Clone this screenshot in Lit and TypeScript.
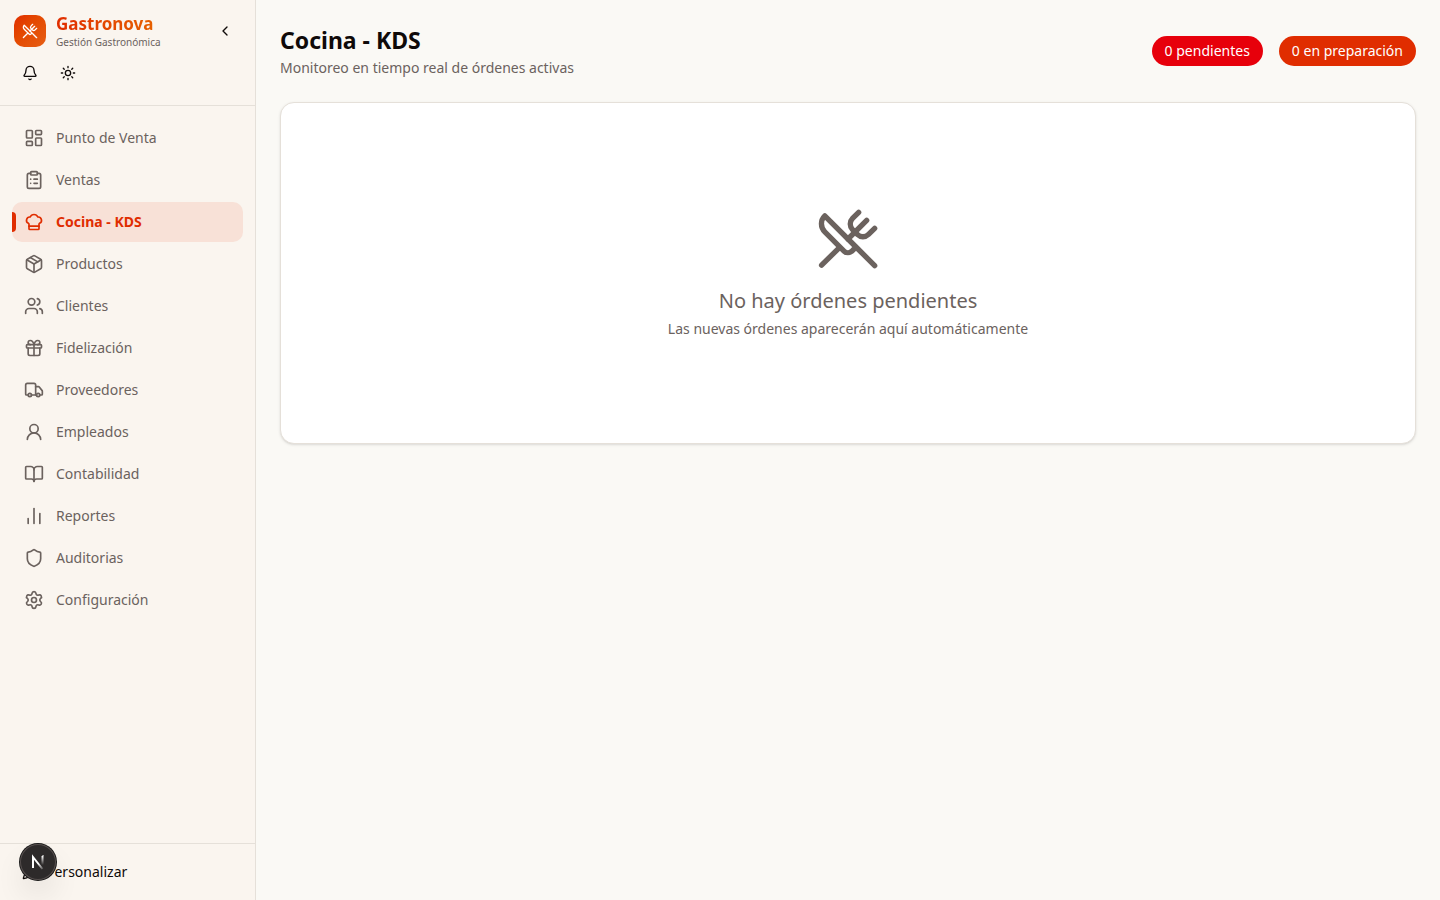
import { LitElement, html, css, svg } from "lit";
import { customElement, property, state } from "lit/decorators.js";
import { classMap } from "lit/directives/class-map.js";

const icons = {
  utensils: svg`<path d="m16 2-2.3 2.3a3 3 0 0 0 0 4.2l1.8 1.8a3 3 0 0 0 4.2 0L22 8"/><path d="M15 15 3.3 3.3a4.2 4.2 0 0 0 0 6l7.3 7.3c.7.7 2 .7 2.8 0L15 15Zm0 0 7 7"/><path d="m2.1 21.8 6.4-6.3"/><path d="m19 5-7 7"/>`,
  chevronLeft: svg`<path d="m15 18-6-6 6-6"/>`,
  bell: svg`<path d="M10.268 21a2 2 0 0 0 3.464 0"/><path d="M3.262 15.326A1 1 0 0 0 4 17h16a1 1 0 0 0 .74-1.673C19.41 13.956 18 12.499 18 8A6 6 0 0 0 6 8c0 4.499-1.411 5.956-2.738 7.326"/>`,
  sun: svg`<circle cx="12" cy="12" r="4"/><path d="M12 2v2M12 20v2m-7.07-17.07 1.41 1.41m11.32 11.32 1.41 1.41M2 12h2m16 0h2M6.34 17.66l-1.41 1.41M19.07 4.93l-1.41 1.41"/>`,
  dashboard: svg`<rect width="7" height="9" x="3" y="3" rx="1"/><rect width="7" height="5" x="14" y="3" rx="1"/><rect width="7" height="9" x="14" y="12" rx="1"/><rect width="7" height="5" x="3" y="16" rx="1"/>`,
  clipboard: svg`<rect width="8" height="4" x="8" y="2" rx="1"/><path d="M16 4h2a2 2 0 0 1 2 2v14a2 2 0 0 1-2 2H6a2 2 0 0 1-2-2V6a2 2 0 0 1 2-2h2"/><path d="M12 11h4M12 16h4M8 11h.01M8 16h.01"/>`,
  chef: svg`<path d="M17 21a1 1 0 0 0 1-1v-5.35c0-.457.316-.844.727-1.041a4 4 0 0 0-2.134-7.589 5 5 0 0 0-9.186 0 4 4 0 0 0-2.134 7.588c.411.198.727.585.727 1.041V20a1 1 0 0 0 1 1Z"/><path d="M6 17h12"/>`,
  box: svg`<path d="M11 21.73a2 2 0 0 0 2 0l7-4A2 2 0 0 0 21 16V8a2 2 0 0 0-1-1.73l-7-4a2 2 0 0 0-2 0l-7 4A2 2 0 0 0 3 8v8a2 2 0 0 0 1 1.73z"/><path d="M12 22V12"/><path d="M3.29 7 12 12l8.71-5"/><path d="m7.5 4.27 9 5.15"/>`,
  users: svg`<path d="M16 21v-2a4 4 0 0 0-4-4H6a4 4 0 0 0-4 4v2"/><path d="M16 3.128a4 4 0 0 1 0 7.744"/><path d="M22 21v-2a4 4 0 0 0-3-3.87"/><circle cx="9" cy="7" r="4"/>`,
  gift: svg`<rect x="3" y="8" width="18" height="4" rx="1"/><path d="M12 8v13"/><path d="M19 12v7a2 2 0 0 1-2 2H7a2 2 0 0 1-2-2v-7"/><path d="M7.5 8a2.5 2.5 0 0 1 0-5A4.8 8 0 0 1 12 8a4.8 8 0 0 1 4.5-5 2.5 2.5 0 0 1 0 5"/>`,
  truck: svg`<path d="M14 18V6a2 2 0 0 0-2-2H4a2 2 0 0 0-2 2v11a1 1 0 0 0 1 1h2"/><path d="M15 18H9"/><path d="M19 18h2a1 1 0 0 0 1-1v-3.65a1 1 0 0 0-.22-.624l-3.48-4.35A1 1 0 0 0 17.52 8H14"/><circle cx="17" cy="18" r="2"/><circle cx="7" cy="18" r="2"/>`,
  user: svg`<circle cx="12" cy="8" r="5"/><path d="M20 21a8 8 0 0 0-16 0"/>`,
  book: svg`<path d="M12 7v14"/><path d="M3 18a1 1 0 0 1-1-1V4a1 1 0 0 1 1-1h5a4 4 0 0 1 4 4 4 4 0 0 1 4-4h5a1 1 0 0 1 1 1v13a1 1 0 0 1-1 1h-6a3 3 0 0 0-3 3 3 3 0 0 0-3-3z"/>`,
  chart: svg`<path d="M5 21v-6"/><path d="M12 21V3"/><path d="M19 21V9"/>`,
  shield: svg`<path d="M20 13c0 5-3.5 7.5-7.66 8.95a1 1 0 0 1-.67-.01C7.5 20.5 4 18 4 13V6a1 1 0 0 1 1-1c2 0 4.5-1.2 6.24-2.72a1.17 1.17 0 0 1 1.52 0C14.51 3.81 17 5 19 5a1 1 0 0 1 1 1z"/>`,
  settings: svg`<path d="M9.671 4.136a2.34 2.34 0 0 1 4.659 0 2.34 2.34 0 0 0 3.319 1.915 2.34 2.34 0 0 1 2.33 4.033 2.34 2.34 0 0 0 0 3.831 2.34 2.34 0 0 1-2.33 4.033 2.34 2.34 0 0 0-3.319 1.915 2.34 2.34 0 0 1-4.659 0 2.34 2.34 0 0 0-3.32-1.915 2.34 2.34 0 0 1-2.33-4.033 2.34 2.34 0 0 0 0-3.831A2.34 2.34 0 0 1 6.35 6.051a2.34 2.34 0 0 0 3.319-1.915"/><circle cx="12" cy="12" r="3"/>`,
  pencil: svg`<path d="M21.174 6.812a1 1 0 0 0-3.986-3.987L3.842 16.174a2 2 0 0 0-.5.83l-1.321 4.352a.5.5 0 0 0 .623.622l4.353-1.32a2 2 0 0 0 .83-.497z"/><path d="m15 5 4 4"/>`,
};

type IconName = keyof typeof icons;

@customElement("line-icon")
export class LineIcon extends LitElement {
  @property() name: IconName = "utensils";

  static styles = css`
    :host { display: block; flex: none; width: 20px; height: 20px; }
    .glyph {
      display: block;
      width: 100%;
      height: 100%;
      fill: none;
      stroke: currentColor;
      stroke-width: 2;
      stroke-linecap: round;
      stroke-linejoin: round;
    }
  `;

  render() {
    return html`<svg class="glyph" viewBox="0 0 24 24" aria-hidden="true">${icons[this.name]}</svg>`;
  }
}

const sections: { icon: IconName; label: string }[] = [
  { icon: "dashboard", label: "Punto de Venta" },
  { icon: "clipboard", label: "Ventas" },
  { icon: "chef", label: "Cocina - KDS" },
  { icon: "box", label: "Productos" },
  { icon: "users", label: "Clientes" },
  { icon: "gift", label: "Fidelización" },
  { icon: "truck", label: "Proveedores" },
  { icon: "user", label: "Empleados" },
  { icon: "book", label: "Contabilidad" },
  { icon: "chart", label: "Reportes" },
  { icon: "shield", label: "Auditorias" },
  { icon: "settings", label: "Configuración" },
];

@customElement("app-sidebar")
export class AppSidebar extends LitElement {
  @state() private current = "Cocina - KDS";

  static styles = css`
    :host {
      display: flex;
      flex-direction: column;
      box-sizing: border-box;
      background: #faf5ef;
      border-right: 1px solid #e5e0d9;
      color: #0f0a09;
      font-size: 14px;
      line-height: 20px;
    }
    .head { padding: 12px 12px 16px 14px; border-bottom: 1px solid #e5e0d9; }
    .brand { display: flex; align-items: center; gap: 10px; height: 38px; }
    .logo {
      display: grid;
      place-items: center;
      width: 32px;
      height: 32px;
      border-radius: 10px;
      color: #fff;
      background: linear-gradient(135deg, #e02d00, #e44800 40%, #e65f15);
    }
    .logo-icon { width: 16px; height: 16px; }
    .words { flex: 1; }
    .name {
      width: max-content;
      font-size: 17px;
      font-weight: 700;
      line-height: 22px;
      color: transparent;
      background: linear-gradient(90deg, #e02d00, #e66000);
      background-clip: text;
      -webkit-background-clip: text;
    }
    .motto { font-size: 10px; line-height: 15px; color: #6b625e; }
    button { font: inherit; color: inherit; border: 0; background: none; padding: 0; cursor: pointer; }
    .tool { display: grid; place-items: center; width: 32px; height: 32px; border-radius: 8px; }
    .tool-icon { width: 16px; height: 16px; }
    .collapse { width: 36px; }
    .tools { display: flex; gap: 6px; padding-top: 7px; }
    .nav { flex: 1; padding: 12px; }
    .list { display: grid; gap: 2px; margin: 0; padding: 0; list-style: none; }
    .link {
      position: relative;
      display: flex;
      align-items: center;
      gap: 12px;
      height: 40px;
      padding: 0 12px;
      border-radius: 10px;
      color: #6b625e;
      text-decoration: none;
    }
    .active { background: #f8e1d7; color: #e02d00; font-weight: 700; }
    .active::before {
      content: "";
      position: absolute;
      left: 0;
      top: 10px;
      width: 4px;
      height: 20px;
      border-radius: 0 4px 4px 0;
      background: currentColor;
    }
    .foot { padding: 12px; border-top: 1px solid #e5e0d9; }
    .customize { display: flex; align-items: center; gap: 8px; width: 100%; height: 32px; padding: 0 10px; }
  `;

  render() {
    return html`
      <header class="head">
        <div class="brand">
          <div class="logo"><line-icon class="logo-icon" name="utensils"></line-icon></div>
          <div class="words">
            <div class="name">Gastronova</div>
            <div class="motto">Gestión Gastronómica</div>
          </div>
          <button class="tool collapse" aria-label="Contraer menú">
            <line-icon class="tool-icon" name="chevronLeft"></line-icon>
          </button>
        </div>
        <div class="tools">
          <button class="tool" aria-label="Notificaciones"><line-icon class="tool-icon" name="bell"></line-icon></button>
          <button class="tool" aria-label="Cambiar tema"><line-icon class="tool-icon" name="sun"></line-icon></button>
        </div>
      </header>
      <nav class="nav">
        <ul class="list">
          ${sections.map(
            (s) => html`<li>
              <a
                href="#"
                class=${classMap({ link: true, active: s.label === this.current })}
                @click=${(e: Event) => {
                  e.preventDefault();
                  this.current = s.label;
                }}
                ><line-icon name=${s.icon}></line-icon><span>${s.label}</span></a
              >
            </li>`
          )}
        </ul>
      </nav>
      <footer class="foot">
        <button class="customize"><line-icon class="tool-icon" name="pencil"></line-icon>Personalizar</button>
      </footer>
    `;
  }
}

@customElement("kitchen-board")
export class KitchenBoard extends LitElement {
  @property({ type: Number }) pending = 0;
  @property({ type: Number }) cooking = 0;

  static styles = css`
    :host { display: flex; flex-direction: column; gap: 24px; padding: 24px; font-size: 14px; line-height: 20px; }
    .top { display: flex; align-items: center; justify-content: space-between; }
    h1 { margin: 0; font-size: 23px; font-weight: 700; line-height: 32px; color: #0f0a09; }
    p { margin: 0; }
    .sub { padding-top: 2px; color: #6b625e; }
    .counts { display: flex; gap: 16px; }
    .badge { padding: 4px 12px; border: 1px solid transparent; border-radius: 15px; color: #fff; background: #e02d00 border-box; }
    .badge.pending { background-color: #e7000b; }
    .card {
      display: flex;
      flex-direction: column;
      align-items: center;
      padding: 104px 24px;
      border: 1px solid #e5e0d9;
      border-radius: 14px;
      background: #fff;
      box-shadow: 0 1px 3px rgb(0 0 0 / 10%), 0 1px 2px -1px rgb(0 0 0 / 10%);
      color: #6b625e;
    }
    .card-icon { width: 64px; height: 64px; }
    .empty { padding-top: 16px; font-size: 20px; line-height: 28px; }
    .hint { padding-top: 4px; }
  `;

  render() {
    return html`
      <header class="top">
        <div>
          <h1>Cocina - KDS</h1>
          <p class="sub">Monitoreo en tiempo real de órdenes activas</p>
        </div>
        <div class="counts">
          <span class="badge pending">${this.pending} pendientes</span>
          <span class="badge">${this.cooking} en preparación</span>
        </div>
      </header>
      <section class="card">
        <line-icon class="card-icon" name="utensils"></line-icon>
        <p class="empty">No hay órdenes pendientes</p>
        <p class="hint">Las nuevas órdenes aparecerán aquí automáticamente</p>
      </section>
    `;
  }
}

@customElement("app-root")
export class AppRoot extends LitElement {
  static styles = css`
    :host {
      display: flex;
      min-height: 100vh;
      background: #faf9f5;
      font-family: "Noto Sans", sans-serif;
    }
    .side { flex: 0 0 256px; }
    .main { flex: 1; min-width: 0; }
    .dev {
      position: fixed;
      left: 20px;
      bottom: 20px;
      display: grid;
      place-items: center;
      width: 36px;
      height: 36px;
      padding: 0;
      border: 0;
      border-radius: 50%;
      background: #2d2a2a;
      box-shadow: 0 0 0 1px #171717, inset 0 0 0 1px #564f4e, 0 16px 32px -8px rgb(0 0 0 / 24%);
    }
    .mark { width: 14px; height: 14px; overflow: visible; fill: none; stroke-width: 2; }
  `;

  render() {
    return html`
      <app-sidebar class="side"></app-sidebar>
      <main class="main"><kitchen-board></kitchen-board></main>
      <button class="dev" aria-label="Herramientas de desarrollo">
        <svg class="mark" viewBox="0 0 14 14" aria-hidden="true">
          <defs>
            <linearGradient id="diag" gradientUnits="userSpaceOnUse" x1="8" y1="8" x2="13" y2="14">
              <stop stop-color="#fff" />
              <stop offset="1" stop-color="#fff" stop-opacity="0.1" />
            </linearGradient>
            <linearGradient id="stem" gradientUnits="userSpaceOnUse" x1="12" y1="1" x2="12" y2="10">
              <stop stop-color="#fff" />
              <stop offset="1" stop-color="#fff" stop-opacity="0" />
            </linearGradient>
          </defs>
          <path d="M2 13V2L11.500 14" stroke="url(#diag)" />
          <path d="M11.500 1h0.010V10" stroke="url(#stem)" />
        </svg>
      </button>
    `;
  }
}
